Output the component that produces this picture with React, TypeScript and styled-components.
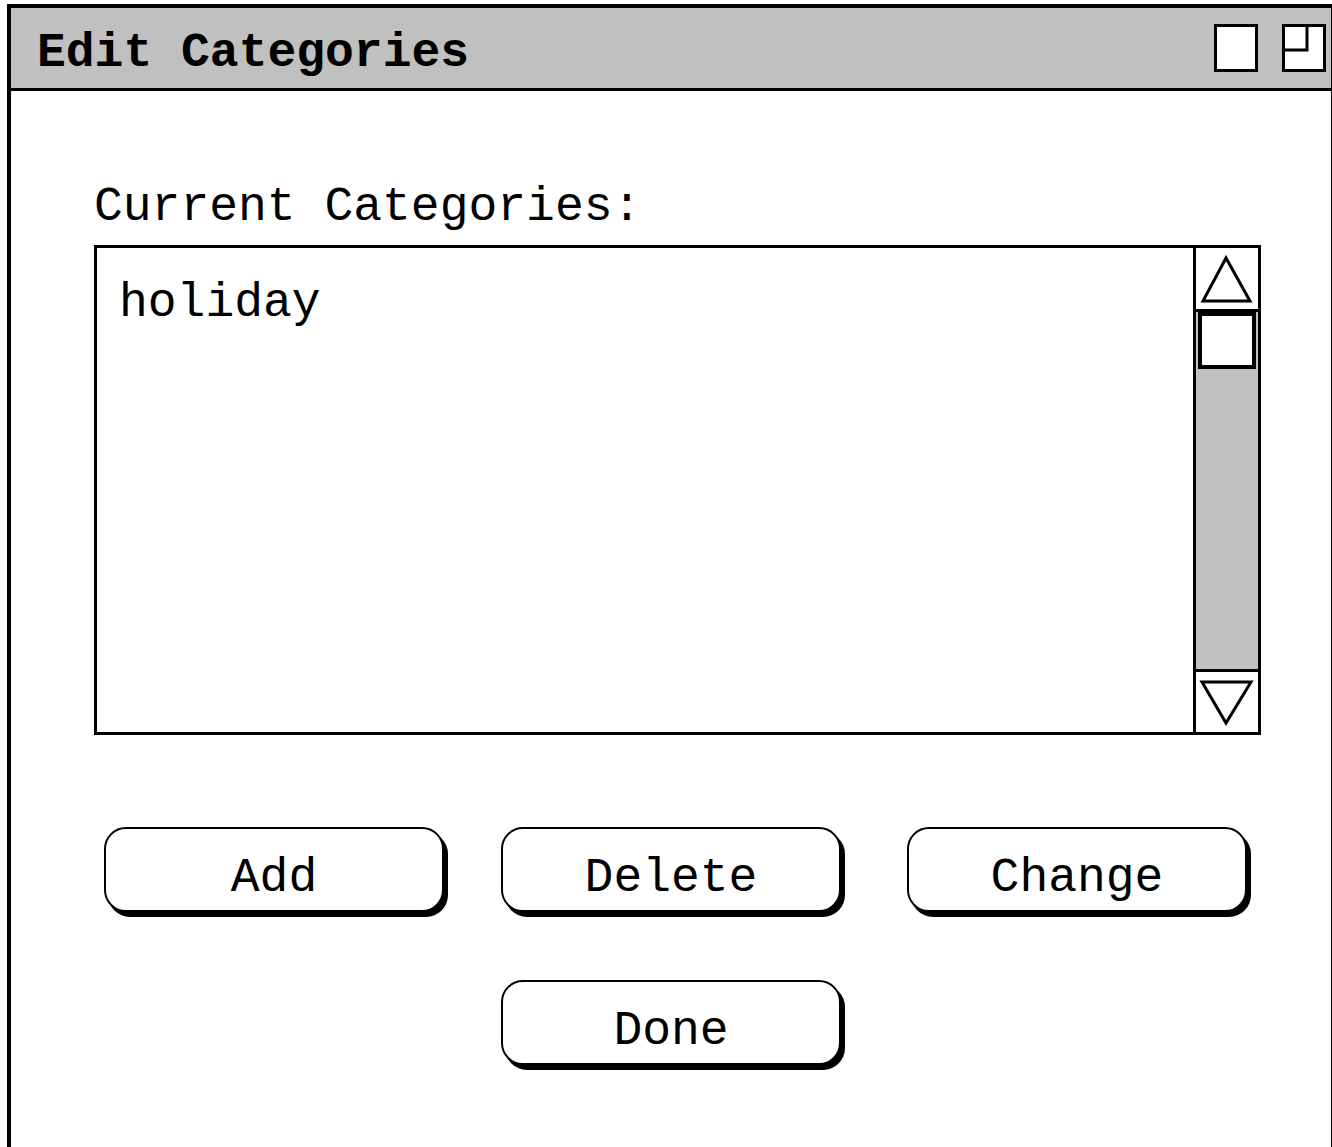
import React from 'react';
import styled, { createGlobalStyle } from 'styled-components';

const GlobalStyle = createGlobalStyle`
  html, body {
    margin: 0;
    padding: 0;
    overflow: hidden;
    background: #fff;
  }
  body {
    font-family: 'Liberation Mono', 'Courier New', monospace;
    color: #000;
  }
`;

const WindowFrame = styled.div`
  box-sizing: border-box;
  margin: 4px 0 0 7px;
  width: 1328px;
  height: 1160px;
  border: 4px solid #000;
  border-bottom: none;
  display: flex;
  flex-direction: column;
`;

const TitleBar = styled.div`
  box-sizing: border-box;
  height: 83px;
  flex: none;
  display: flex;
  align-items: center;
  padding: 0 5px 0 26px;
  background: #c0c0c0;
  border-bottom: 3px solid #000;
`;

const Title = styled.div`
  margin-top: 10px;
  font-size: 48px;
  line-height: 48px;
  font-weight: 700;
`;

const Controls = styled.div`
  margin-left: auto;
  display: flex;
  gap: 24px;
`;

const Body = styled.div`
  padding: 92px 0 0 83px;
`;

const Label = styled.div`
  font-size: 48px;
  line-height: 48px;
  margin-bottom: 14px;
`;

const ListBox = styled.div`
  box-sizing: border-box;
  width: 1167px;
  height: 490px;
  border: 3px solid #000;
  display: flex;
`;

const Items = styled.div`
  flex: 1;
  padding: 31px 0 0 22px;
`;

const Item = styled.div`
  font-size: 48px;
  line-height: 48px;
`;

const ScrollBar = styled.div`
  box-sizing: border-box;
  width: 65px;
  border-left: 3px solid #000;
  display: flex;
  flex-direction: column;
`;

const ArrowCell = styled.div<{ $edge: 'top' | 'bottom' }>`
  box-sizing: border-box;
  height: ${(p) => (p.$edge === 'top' ? 64 : 63)}px;
  flex: none;
  background: #fff;
  ${(p) => (p.$edge === 'top' ? 'border-bottom' : 'border-top')}: 3px solid #000;
  svg {
    display: block;
  }
`;

const Track = styled.div`
  flex: 1;
  background: #c0c0c0;
  padding: 0 2px;
`;

const Thumb = styled.div`
  box-sizing: border-box;
  height: 57px;
  border: 4px solid #000;
  background: #fff;
`;

const ButtonGrid = styled.div`
  display: grid;
  grid-template-columns: 340px 57px 340px 66px 340px;
  row-gap: 68px;
  margin: 92px 0 0 10px;
`;

const Button = styled.button<{ $col: number }>`
  grid-column: ${(p) => p.$col};
  box-sizing: border-box;
  height: 85px;
  padding: 16px 0 0;
  border: 2px solid #000;
  border-radius: 22px;
  box-shadow: 4px 5px 0 #000;
  background: #fff;
  color: #000;
  font-family: 'Liberation Mono', 'Courier New', monospace;
  font-size: 48px;
  line-height: 48px;
  display: flex;
  align-items: center;
  justify-content: center;
`;

// window buttons in the title bar: plain box and a box with a restored pane
const BoxIcon = ({ split }: { split?: boolean }) => (
  <svg width="44" height="48" viewBox="0 0 44 48">
    <rect x="1.5" y="1.5" width="41" height="45" fill="#fff" stroke="#000" strokeWidth="3" />
    {split && <path d="M25 1.5 V26 H1.5" fill="none" stroke="#000" strokeWidth="3" />}
  </svg>
);

const UpArrow = () => (
  <svg width="62" height="61" viewBox="0 0 62 61">
    <polygon points="30,10 7,53 54,53" fill="none" stroke="#000" strokeWidth="3" />
  </svg>
);

const DownArrow = () => (
  <svg width="62" height="60" viewBox="0 0 62 60">
    <polygon points="6,10 55,10 30,51" fill="none" stroke="#000" strokeWidth="3" />
  </svg>
);

const categories = ['holiday'];

export default function App() {
  return (
    <>
      <GlobalStyle />
      <WindowFrame>
        <TitleBar>
          <Title>Edit Categories</Title>
          <Controls>
            <BoxIcon />
            <BoxIcon split />
          </Controls>
        </TitleBar>
        <Body>
          <Label>Current Categories:</Label>
          <ListBox>
            <Items>
              {categories.map((c) => (
                <Item key={c}>{c}</Item>
              ))}
            </Items>
            <ScrollBar>
              <ArrowCell $edge="top">
                <UpArrow />
              </ArrowCell>
              <Track>
                <Thumb />
              </Track>
              <ArrowCell $edge="bottom">
                <DownArrow />
              </ArrowCell>
            </ScrollBar>
          </ListBox>
          <ButtonGrid>
            <Button $col={1}>Add</Button>
            <Button $col={3}>Delete</Button>
            <Button $col={5}>Change</Button>
            <Button $col={3}>Done</Button>
          </ButtonGrid>
        </Body>
      </WindowFrame>
    </>
  );
}
